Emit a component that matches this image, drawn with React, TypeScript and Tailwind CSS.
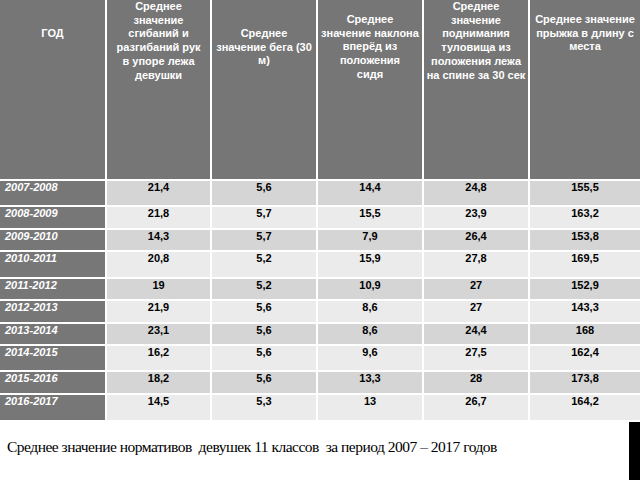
import React from "react";

const years = [
  "2007-2008",
  "2008-2009",
  "2009-2010",
  "2010-2011",
  "2011-2012",
  "2012-2013",
  "2013-2014",
  "2014-2015",
  "2015-2016",
  "2016-2017",
];

const data: string[][] = [
  ["21,4", "5,6", "14,4", "24,8", "155,5"],
  ["21,8", "5,7", "15,5", "23,9", "163,2"],
  ["14,3", "5,7", "7,9", "26,4", "153,8"],
  ["20,8", "5,2", "15,9", "27,8", "169,5"],
  ["19", "5,2", "10,9", "27", "152,9"],
  ["21,9", "5,6", "8,6", "27", "143,3"],
  ["23,1", "5,6", "8,6", "24,4", "168"],
  ["16,2", "5,6", "9,6", "27,5", "162,4"],
  ["18,2", "5,6", "13,3", "28", "173,8"],
  ["14,5", "5,3", "13", "26,7", "164,2"],
];

const head = "bg-[#767676] text-white font-bold text-[11px] leading-[13.7px] text-center";

export default function App() {
  return (
    <div className="w-[640px] h-[480px] bg-white overflow-hidden flex flex-col font-['Liberation_Sans',Arial,sans-serif]">
      <div className="grid grid-cols-[105px_103px_104px_104px_104px_1fr] grid-rows-[179px_24px_21px_20px_25px_20px_21px_20px_24px_21px_25px] gap-[2px] bg-white">
        <div className={`${head} pt-[27px]`}>ГОД</div>
        <div className={`${head} pt-0`}>
          Среднее<br />значение<br />сгибаний и<br />разгибаний рук<br />в упоре лежа<br />девушки
        </div>
        <div className={`${head} pt-[27px]`}>
          Среднее<br />значение бега (30<br />м)
        </div>
        <div className={`${head} pt-[13px]`}>
          Среднее<br />значение наклона<br />вперёд из<br />положения<br />сидя
        </div>
        <div className={`${head} pt-0`}>
          Среднее<br />значение<br />поднимания<br />туловища из<br />положения лежа<br />на спине за 30 сек
        </div>
        <div className={`${head} pt-[13px]`}>
          Среднее значение<br />прыжка в длину с<br />места
        </div>
        {years.map((y, i) => (
          <React.Fragment key={y}>
            <div className="bg-[#777777] text-white font-bold italic text-[11px] leading-[13px] pl-[5px]">
              {y}
            </div>
            {data[i].map((v, j) => (
              <div
                key={j}
                className={`${i % 2 === 0 ? "bg-[#d5d5d5]" : "bg-[#ebebeb]"} text-black font-bold text-[11px] leading-[13px] text-center`}
              >
                {v}
              </div>
            ))}
          </React.Fragment>
        ))}
      </div>
      <div className="flex flex-1">
        <div className="flex-1 pt-[17px] pl-[7px] text-[15.5px] leading-[20px] tracking-[-0.5px] text-black font-['Liberation_Serif','Times_New_Roman',serif] whitespace-pre">
          {"Среднее значение нормативов  девушек 11 классов  за период 2007 – 2017 годов"}
        </div>
        <div className="w-[11px] mt-[2px] bg-black" />
      </div>
    </div>
  );
}
